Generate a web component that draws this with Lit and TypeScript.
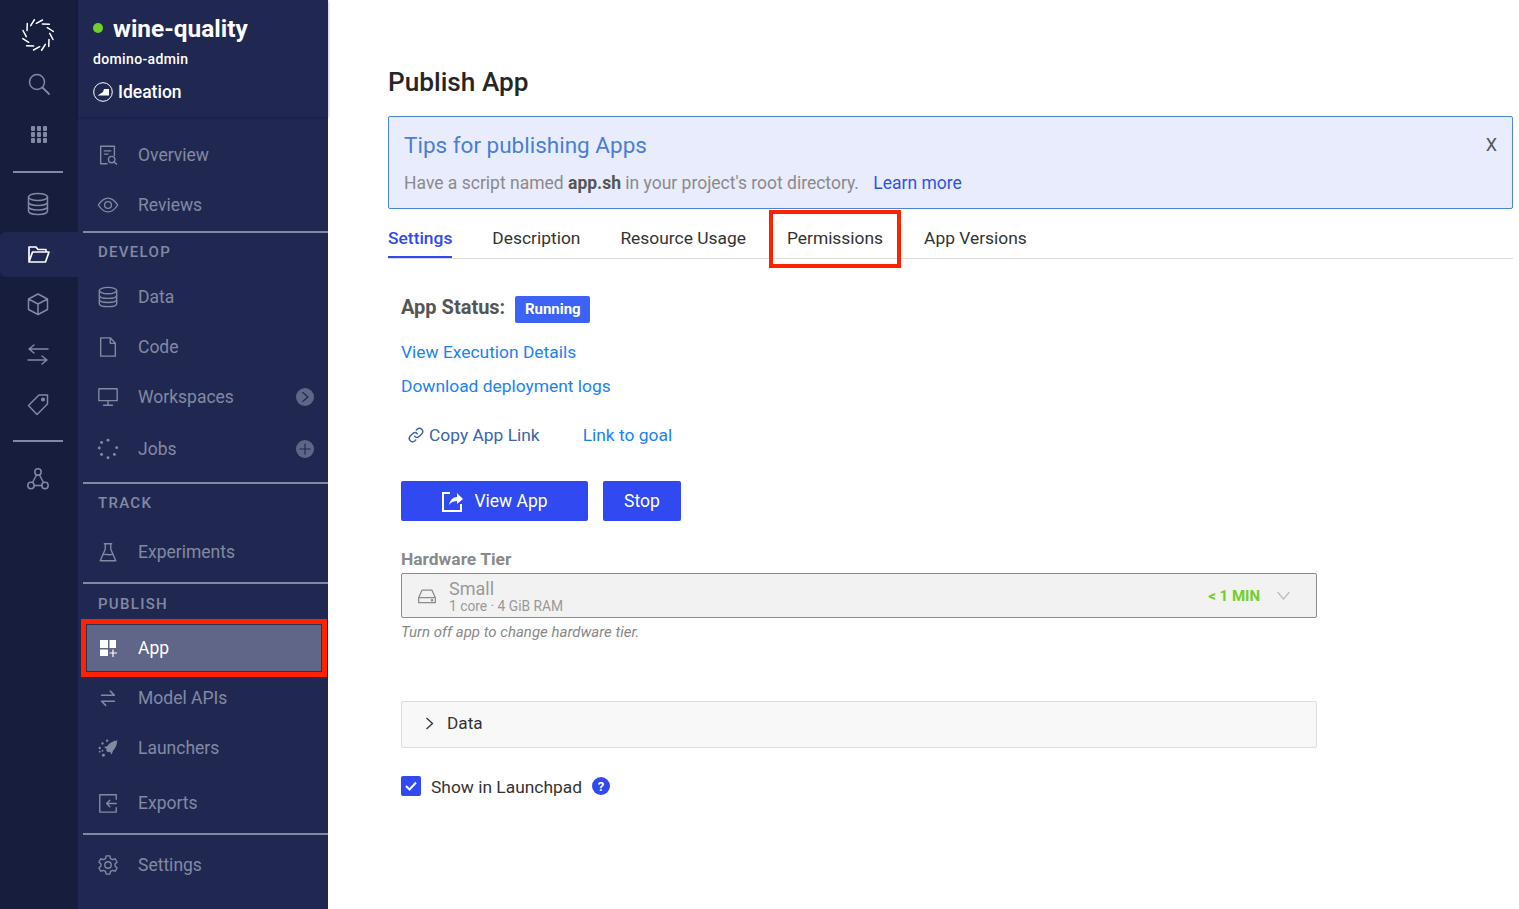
import { LitElement, html, svg, css } from 'lit';
import { customElement } from 'lit/decorators.js';

const icon = (body: unknown, size = 24) => html`
  <svg class="ico" width=${size} height=${size} viewBox="0 0 24 24" fill="none" stroke="currentColor" stroke-width="1.5" stroke-linecap="round" stroke-linejoin="round">${body}</svg>
`;

const db = svg`<ellipse cx="12" cy="5" rx="9.500" ry="3.500"/><path d="M2.500 5v14c0 2 4 3.500 9.500 3.500s9.500-1.500 9.500-3.500V5M2.500 10c0 2 4 3.500 9.500 3.500s9.500-1.500 9.500-3.500M2.500 14.500c0 2 4 3.500 9.500 3.500s9.500-1.500 9.500-3.500"/>`;

const icons: Record<string, unknown> = {
  search: svg`<circle cx="10" cy="10" r="7.500"/><path d="M15.500 15.500 22 22" stroke-width="1.800"/>`,
  db,
  folder: svg`<path d="M3 19V4h7l2 2.500h8V9M3 19 6.500 9H23l-3.500 10z" stroke-width="1.700"/>`,
  cube: svg`<path d="M12 2 21.500 7v10.500L12 22.500 2.500 17.500V7zM2.500 7 12 12l9.500-5M12 12v10.500"/>`,
  swap: svg`<path d="M22 7H3M8 3 3 7l5 4M2 18h19M16 14l5 4-5 4"/>`,
  tag: svg`<path d="M13 3h8.500v9L11 22.500 2.500 13.500z"/><circle cx="17" cy="7.500" r="1.300" fill="currentColor"/>`,
  net: svg`<circle cx="12" cy="5" r="3.200"/><circle cx="5" cy="18.500" r="3.200"/><circle cx="19" cy="18.500" r="3.200"/><path d="M10.500 8 6.500 15.500M13.500 8l4 7.500M8.200 18.500h7.600"/>`,
  overview: svg`<path d="M11 21.500H4V2.500h15v10M8 7.500h7M8 11h4"/><circle cx="16" cy="17" r="3.500"/><path d="m18.500 19.500 3 2.500"/>`,
  eye: svg`<path d="M1.500 12C5 6.500 8.500 4.500 12 4.500s7 2 10.500 7.500C19 17.500 15.500 19.500 12 19.500S5 17.500 1.500 12z"/><circle cx="12" cy="12" r="3.700"/>`,
  file: svg`<path d="M4 2h10.500L20 8v14H4zM14.500 2v6H20"/>`,
  monitor: svg`<path d="M2 3h20v13H2zM12 16v5M7 21h10"/>`,
  jobs: svg`<g fill="currentColor" stroke="none"><circle cx="12" cy="2.500" r="1.600"/><circle cx="21.500" cy="10.500" r="1.600"/><circle cx="19" cy="18" r="1.600"/><circle cx="12" cy="21.500" r="1.600"/><circle cx="5" cy="18" r="1.600"/><circle cx="2.500" cy="11" r="1.600"/><circle cx="5" cy="5" r="1.600"/></g>`,
  flask: svg`<path d="M8 3h8M9 3v6L3.500 21.500h17L15 9V3M6.500 15c3-1.500 6 1 10-.5"/>`,
  apis: svg`<path d="M5 9h14l-4.500-4.500M19 15.500H5l4.500 4.500" stroke-width="1.700"/>`,
  rocket: svg`<path fill="currentColor" stroke="none" d="M23 3.500c-5 .5-9 2.500-12 6.500l-3.500 1 3 2-.5 2 2 1.500 2-.5 2 3 1.500-4c3-3 4.500-7 4.500-11.500z"/><g fill="currentColor" stroke="none"><circle cx="6" cy="7" r="1.300"/><circle cx="11" cy="4" r="1.300"/><circle cx="3" cy="12" r="1.300"/><circle cx="3" cy="16" r="1"/><circle cx="7" cy="20" r="1.600"/><circle cx="6" cy="15" r="1"/></g>`,
  exports: svg`<path d="M21 8V3H3v19h18v-5M21 12.500h-10M14 9l-3.500 3.500L14 16"/>`,
  gear: svg`<path d="M10 2h4l.7 3 2.300 1.200 2.900-1 2 3.500-2.200 2.100v2.400l2.200 2.100-2 3.500-2.900-1L14.700 19l-.7 3h-4l-.7-3L7 17.800l-2.900 1-2-3.500 2.200-2.100v-2.400L2.100 8.700l2-3.500 2.900 1L9.300 5z"/><circle cx="12" cy="12" r="3.500"/>`,
};

type NavItem = { label: string; icon: string; h: number; tail?: 'arrow' | 'plus' };

const ticks = Array.from({ length: 12 }, (_, i) => i * 30);

@customElement('app-root')
export class AppRoot extends LitElement {
  static styles = css`
    :host {
      display: flex;
      min-height: 909px;
      font-family: Roboto, "Liberation Sans", sans-serif;
      background: #fff;
      color: #2b2b2b;
    }

    .ico {
      display: block;
      flex: none;
    }

    /* icon rail */
    .rail {
      width: 78px;
      flex: none;
      background: #161d3d;
      color: #8389a3;
      display: flex;
      flex-direction: column;
      align-items: center;
    }

    .rail-btn {
      width: 100%;
      height: 50px;
      display: flex;
      align-items: center;
      justify-content: center;
      box-sizing: border-box;
      padding-right: 2px;
    }

    .rail-btn.logo {
      margin-top: 10px;
      color: #fff;
    }

    .rail-btn.first {
      height: 48px;
      padding-right: 0;
    }

    .rail-btn.grid {
      height: 51px;
      padding: 2px 0 0;
    }

    .rail-btn.active {
      height: 45px;
      margin-top: 3px;
      margin-bottom: 2px;
      background: #202852;
      color: #fff;
      border-radius: 6px 0 0 6px;
    }

    .rail hr {
      width: 50px;
      height: 2px;
      margin: 12px 2px 6px 0;
      border: 0;
      background: #8389a3;
      flex: none;
    }

    .rail hr.second {
      margin: 11px 2px 12px 0;
    }

    .dots {
      display: grid;
      grid-template-columns: repeat(3, 4.500px);
      gap: 1.500px;
    }

    .dots i {
      width: 4.500px;
      height: 4.500px;
      background: #8389a3;
      border-radius: 1px;
    }

    /* project sidebar */
    .side {
      width: 250px;
      flex: none;
      background: #202852;
      color: #8389a3;
    }

    .head {
      height: 117px;
      box-sizing: border-box;
      padding: 13px 0 0 15px;
      color: #fff;
      box-shadow: 0 1px 3px rgba(10, 14, 40, 0.35);
    }

    .title {
      display: flex;
      align-items: center;
      gap: 10px;
      font-size: 24.400px;
      font-weight: 700;
      height: 30px;
    }

    .title i {
      width: 10px;
      height: 10px;
      border-radius: 50%;
      background: #6fd02b;
    }

    .owner {
      margin-top: 7px;
      font-size: 14px;
      font-weight: 500;
      letter-spacing: 0.35px;
      line-height: 18px;
    }

    .stage {
      display: flex;
      align-items: center;
      gap: 5px;
      margin-top: 13px;
      font-size: 17.500px;
      font-weight: 500;
      line-height: 22px;
    }

    .nav {
      padding: 12px 0 0 5px;
    }

    .item {
      display: flex;
      align-items: center;
      font-size: 17.500px;
      box-sizing: border-box;
      padding: 2px 0 0 14px;
    }

    .item .ico {
      margin-right: 19px;
    }

    .tail {
      margin-left: auto;
      margin-right: 14px;
      width: 18px;
      height: 18px;
      border-radius: 50%;
      background: #5f6687;
      color: #202852;
    }

    .item.selected {
      height: 58px;
      width: 246px;
      margin-left: -2px;
      border: 5px solid #ff2200;
      padding: 0 0 0 11px;
      background: #5f6687;
      color: #fff;
      box-shadow: inset 0 0 0 1px #2a3158;
    }

    .sep {
      height: 2px;
      background: #8389a3;
    }

    .sep.s2 {
      margin-top: 2px;
    }

    .sep.s6 {
      margin-top: 6px;
    }

    .sep.s7 {
      margin-top: 7px;
    }

    .label {
      height: 38px;
      box-sizing: border-box;
      display: flex;
      align-items: center;
      padding-left: 15px;
      font-size: 15px;
      font-weight: 500;
      letter-spacing: 1.300px;
    }

    .label.short {
      height: 35px;
      padding-top: 5px;
    }

    /* main column */
    .main {
      flex: 1;
      min-width: 0;
      padding: 66px 6px 0 60px;
    }

    h1 {
      margin: 0;
      font-size: 26.200px;
      line-height: 32px;
      font-weight: 500;
      color: #262626;
    }

    .tips {
      position: relative;
      margin-top: 18px;
      height: 93px;
      box-sizing: border-box;
      border: 1px solid #4a86d8;
      border-radius: 2px;
      background: #e9ecfd;
      padding: 13px 15px 0;
    }

    .tips h2 {
      margin: 0;
      font-size: 22.500px;
      line-height: 30px;
      font-weight: 400;
      color: #4a7fd4;
    }

    .tips p {
      margin: 11px 0 0;
      font-size: 17.500px;
      line-height: 24px;
      color: #8a8a8a;
    }

    .tips b {
      color: #555;
      font-weight: 700;
    }

    .tips a {
      margin-left: 10px;
      color: #2f55e8;
    }

    .close {
      position: absolute;
      top: 17px;
      right: 15px;
      font-size: 18px;
      line-height: 22px;
      color: #555;
    }

    .tabs {
      display: flex;
      gap: 40px;
      height: 49px;
      border-bottom: 1px solid #ddd;
      font-size: 17.400px;
    }

    .tab {
      height: 49px;
      box-sizing: border-box;
      padding-top: 17px;
      line-height: 24px;
      color: #333;
    }

    .tab.on {
      color: #3049f0;
      font-weight: 500;
      border-bottom: 2px solid #3049f0;
    }

    .tab.marked {
      position: relative;
      margin: 0 1px;
    }

    .tab.marked::after {
      content: "";
      position: absolute;
      left: -18px;
      right: -18px;
      top: 1px;
      height: 58px;
      box-sizing: border-box;
      border: 4px solid #ff2200;
    }

    .body {
      padding: 37px 0 0 13px;
      width: 916px;
    }

    .status {
      display: flex;
      align-items: flex-start;
      gap: 10px;
      height: 27px;
      font-size: 20px;
      line-height: 22px;
      font-weight: 700;
      color: #555;
    }

    .badge {
      height: 27px;
      width: 75px;
      box-sizing: border-box;
      padding-bottom: 2px;
      display: flex;
      align-items: center;
      justify-content: center;
      border-radius: 2px;
      background: #3d63f6;
      color: #fff;
      font-size: 15px;
      font-weight: 700;
    }

    .link {
      display: block;
      font-size: 17.400px;
      line-height: 24px;
      color: #1a82f5;
    }

    .link.a {
      margin-top: 17px;
    }

    .link.b {
      margin-top: 10px;
    }

    .linkrow {
      display: flex;
      align-items: center;
      margin-top: 25px;
      padding-left: 7px;
      height: 24px;
    }

    .copy {
      display: flex;
      align-items: center;
      gap: 5px;
      font-size: 17.400px;
      line-height: 24px;
      color: #3b64a8;
      margin-right: 43px;
    }

    .buttons {
      display: flex;
      gap: 15px;
      margin-top: 34px;
    }

    .btn {
      height: 40px;
      display: flex;
      align-items: center;
      justify-content: center;
      gap: 11px;
      border-radius: 2px;
      background: #3049f0;
      color: #fff;
      font-size: 17.500px;
    }

    .btn.view {
      width: 187px;
    }

    .btn.stop {
      width: 78px;
    }

    .hw-label {
      margin-top: 27px;
      font-size: 17.400px;
      line-height: 22px;
      font-weight: 700;
      color: #8a8a8a;
    }

    .select {
      margin-top: 3px;
      height: 45px;
      box-sizing: border-box;
      display: flex;
      align-items: center;
      border: 1px solid #8c8c8c;
      border-radius: 2px;
      background: #f2f2f2;
      padding: 0 26px 0 15px;
      color: #8a8a8a;
    }

    .select-text {
      margin-left: 12px;
      padding-top: 2px;
      display: flex;
      flex-direction: column;
      color: #999;
    }

    .select-text span {
      font-size: 18px;
      line-height: 20px;
    }

    .select-text small {
      font-size: 13.800px;
      line-height: 15px;
    }

    .eta {
      margin-left: auto;
      margin-right: 17px;
      font-size: 15px;
      font-weight: 700;
      color: #6fcf2a;
    }

    .help {
      margin-top: 5px;
      font-size: 15px;
      line-height: 18px;
      font-style: italic;
      color: #888;
    }

    .panel {
      margin-top: 60px;
      height: 47px;
      box-sizing: border-box;
      display: flex;
      align-items: center;
      gap: 11px;
      padding: 0 0 3px 21px;
      border: 1px solid #ddd;
      border-radius: 2px;
      background: #f8f8f8;
      font-size: 17.200px;
      color: #333;
    }

    .launch {
      display: flex;
      align-items: center;
      margin-top: 28px;
      font-size: 17.400px;
      color: #333;
      height: 20px;
    }

    .launch span.text {
      padding-top: 2px;
    }

    .check {
      width: 20px;
      height: 20px;
      border-radius: 2px;
      background: #3049f0;
      display: flex;
      align-items: center;
      justify-content: center;
      margin-right: 10px;
    }

    .hint {
      width: 18px;
      height: 18px;
      margin-left: 10px;
      border-radius: 50%;
      background: #3049f0;
      color: #fff;
      font-size: 13px;
      font-weight: 700;
      display: flex;
      align-items: center;
      justify-content: center;
    }
  `;

  private logo() {
    return html`<svg class="ico" width="34" height="34" viewBox="0 0 34 34" fill="none" stroke="currentColor" stroke-width="1.500" stroke-linecap="round">
      ${ticks.map(
        (a) => svg`<line x1="15.300" y1="5.300" x2="21.500" y2="2" transform="rotate(${a} 17 17)"/>`
      )}
    </svg>`;
  }

  private navItem(n: NavItem) {
    return html`
      <div class="item" style="height:${n.h}px">
        ${icon(icons[n.icon], 22)}
        <span>${n.label}</span>
        ${n.tail === 'arrow'
          ? html`<span class="tail">${icon(svg`<path d="m9 6 7 6-7 6"/>`, 18)}</span>`
          : n.tail === 'plus'
            ? html`<span class="tail">${icon(svg`<path d="M12 5v14M5 12h14"/>`, 18)}</span>`
            : ''}
      </div>
    `;
  }

  render() {
    return html`
      <div class="rail">
        <div class="rail-btn logo">${this.logo()}</div>
        <div class="rail-btn first">${icon(icons.search)}</div>
        <div class="rail-btn grid">
          <div class="dots">${[...Array(9)].map(() => html`<i></i>`)}</div>
        </div>
        <hr />
        <div class="rail-btn">${icon(icons.db)}</div>
        <div class="rail-btn active">${icon(icons.folder)}</div>
        <div class="rail-btn">${icon(icons.cube)}</div>
        <div class="rail-btn">${icon(icons.swap)}</div>
        <div class="rail-btn">${icon(icons.tag)}</div>
        <hr class="second" />
        <div class="rail-btn">${icon(icons.net)}</div>
      </div>

      <div class="side">
        <div class="head">
          <div class="title"><i></i>wine-quality</div>
          <div class="owner">domino-admin</div>
          <div class="stage">
            <svg width="20" height="20" viewBox="0 0 20 20" fill="none" stroke="currentColor">
              <circle cx="10" cy="10" r="9.300" />
              <path d="M4.500 13.500 10 10l1-3h5v6.500z" fill="currentColor" stroke="none" />
            </svg>
            Ideation
          </div>
        </div>
        <div class="nav">
          ${this.navItem({ label: 'Overview', icon: 'overview', h: 50 })}
          ${this.navItem({ label: 'Reviews', icon: 'eye', h: 50 })}
          <div class="sep s2"></div>
          <div class="label">DEVELOP</div>
          ${this.navItem({ label: 'Data', icon: 'db', h: 50 })}
          ${this.navItem({ label: 'Code', icon: 'file', h: 50 })}
          ${this.navItem({ label: 'Workspaces', icon: 'monitor', h: 50, tail: 'arrow' })}
          ${this.navItem({ label: 'Jobs', icon: 'jobs', h: 54, tail: 'plus' })}
          <div class="sep s7"></div>
          <div class="label">TRACK</div>
          ${this.navItem({ label: 'Experiments', icon: 'flask', h: 58 })}
          <div class="sep s2"></div>
          <div class="label short">PUBLISH</div>
          <div class="item selected">
            <svg class="ico" width="22" height="22" viewBox="0 0 22 22" fill="#fff">
              <path d="M3 3h8v8H3zM12.500 3H19v8h-6.500zM3 12.500h8V19H3z" />
              <path d="M16 12.500V20M12.500 16H20" stroke="#fff" stroke-width="1.200" />
            </svg>
            <span>App</span>
          </div>
          ${this.navItem({ label: 'Model APIs', icon: 'apis', h: 40 })}
          ${this.navItem({ label: 'Launchers', icon: 'rocket', h: 60 })}
          ${this.navItem({ label: 'Exports', icon: 'exports', h: 50 })}
          <div class="sep s6"></div>
          ${this.navItem({ label: 'Settings', icon: 'gear', h: 58 })}
        </div>
      </div>

      <div class="main">
        <h1>Publish App</h1>
        <div class="tips">
          <h2>Tips for publishing Apps</h2>
          <p>Have a script named <b>app.sh</b> in your project's root directory. <a>Learn more</a></p>
          <span class="close">X</span>
        </div>
        <div class="tabs">
          <div class="tab on">Settings</div>
          <div class="tab">Description</div>
          <div class="tab">Resource Usage</div>
          <div class="tab marked">Permissions</div>
          <div class="tab">App Versions</div>
        </div>
        <div class="body">
          <div class="status">App Status: <span class="badge">Running</span></div>
          <a class="link a">View Execution Details</a>
          <a class="link b">Download deployment logs</a>
          <div class="linkrow">
            <span class="copy">
              ${icon(svg`<g stroke-width="2.200"><path d="M10 14a5 5 0 0 0 7 0l4-4a5 5 0 0 0-7-7l-1.500 1.500M14 10a5 5 0 0 0-7 0l-4 4a5 5 0 0 0 7 7l1.500-1.500"/></g>`, 16)}
              Copy App Link
            </span>
            <a class="link">Link to goal</a>
          </div>
          <div class="buttons">
            <div class="btn view">
              <svg width="22" height="22" viewBox="0 0 22 22" fill="none" stroke="#fff" stroke-width="2">
                <path d="M9 3H2v18h18v-7" />
                <path d="M8 15c1-5 4-8 8-8V3l6 6-6 5v-3c-3 0-6 1-8 4z" fill="#fff" stroke="none" />
              </svg>
              View App
            </div>
            <div class="btn stop">Stop</div>
          </div>
          <div class="hw-label">Hardware Tier</div>
          <div class="select">
            ${icon(svg`<path d="M2 14 6 5h12l4 9v6H2zM2 14h20"/><circle cx="18" cy="17" r=".8" fill="currentColor"/>`, 20)}
            <div class="select-text">
              <span>Small</span>
              <small>1 core · 4 GiB RAM</small>
            </div>
            <span class="eta">&lt; 1 MIN</span>
            <svg width="13" height="9" viewBox="0 0 13 9" fill="none" stroke="#bbb" stroke-width="1.200"><path d="m.5 1 6 7 6-7" /></svg>
          </div>
          <div class="help">Turn off app to change hardware tier.</div>
          <div class="panel">
            <svg width="13" height="13" viewBox="0 0 13 13" fill="none" stroke="#333" stroke-width="1.300"><path d="m3.500 1 6 5.500-6 5.500" /></svg>
            Data
          </div>
          <div class="launch">
            <span class="check">
              <svg width="14" height="14" viewBox="0 0 14 14" fill="none" stroke="#fff" stroke-width="2"><path d="m2 7 3.500 3.500L12 3.500" /></svg>
            </span>
            <span class="text">Show in Launchpad</span>
            <span class="hint">?</span>
          </div>
        </div>
      </div>
    `;
  }
}
